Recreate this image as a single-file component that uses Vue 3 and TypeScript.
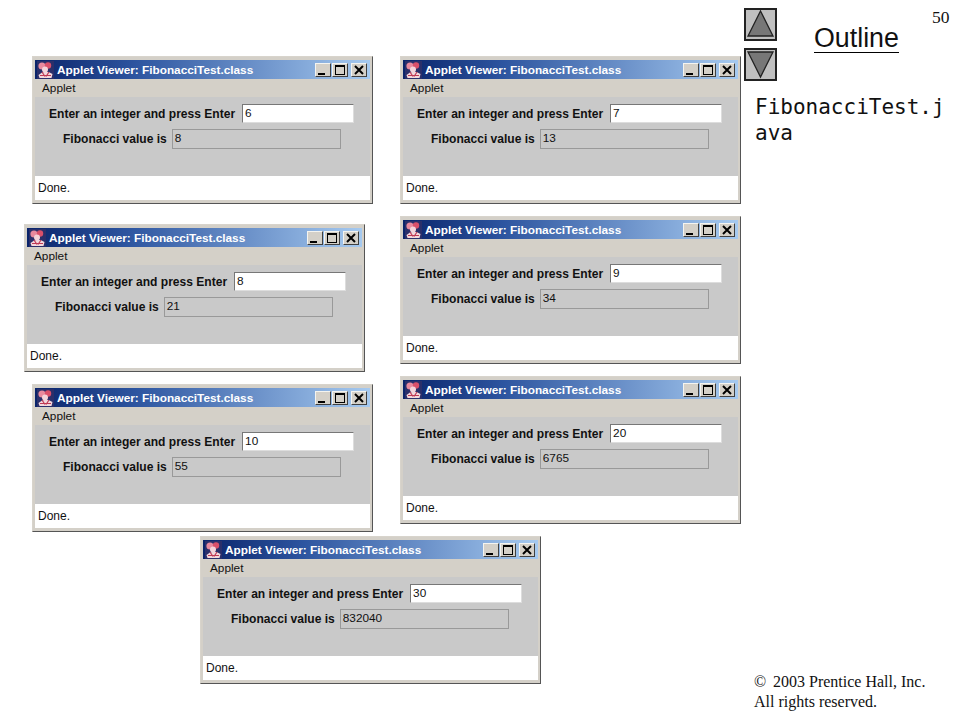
<script setup lang="ts">
interface ViewerWindow {
  x: number
  y: number
  input: string
  value: string
}

const windows: ViewerWindow[] = [
  { x: 32, y: 56, input: '6', value: '8' },
  { x: 400, y: 56, input: '7', value: '13' },
  { x: 24, y: 224, input: '8', value: '21' },
  { x: 400, y: 216, input: '9', value: '34' },
  { x: 32, y: 384, input: '10', value: '55' },
  { x: 400, y: 376, input: '20', value: '6765' },
  { x: 200, y: 536, input: '30', value: '832040' },
]
</script>

<template>
  <div class="slide">
    <div
      v-for="win in windows"
      :key="win.input"
      class="window"
      :style="{ left: win.x + 'px', top: win.y + 'px' }"
    >
      <div class="titlebar">
        <svg class="app-icon" width="17" height="18" viewBox="0 0 17 18">
          <rect x="0" y="0" width="17" height="18" fill="#2a2f6a" />
          <circle cx="5" cy="5" r="3.6" fill="#e88a9e" />
          <circle cx="11" cy="4.5" r="3.2" fill="#d9506a" />
          <circle cx="8" cy="8.5" r="3" fill="#f4d4da" />
          <path d="M1.5 14 Q8 8 15.5 13 L14.5 17 L2.5 17 Z" fill="#f2d8dd" />
          <path d="M3 14.5 H14 M5 11 L8 15.5 M12 11 L9 15.5" stroke="#c03a55" stroke-width="1.2" fill="none" />
        </svg>
        <span class="title">Applet Viewer: FibonacciTest.class</span>
        <div class="controls">
          <span class="ctl">
            <svg width="16" height="14" viewBox="0 0 16 14"><path d="M3 11 H10" stroke="#000" stroke-width="2" /></svg>
          </span>
          <span class="ctl">
            <svg width="16" height="14" viewBox="0 0 16 14"><rect x="3.5" y="2.5" width="9" height="9" fill="none" stroke="#000" /><path d="M3 3 H13" stroke="#000" stroke-width="2" /></svg>
          </span>
          <span class="ctl close">
            <svg width="16" height="14" viewBox="0 0 16 14"><path d="M4 3 L12 11 M12 3 L4 11" stroke="#000" stroke-width="2" /></svg>
          </span>
        </div>
      </div>
      <div class="menubar">Applet</div>
      <div class="content">
        <div class="row row-input">
          <label>Enter an integer and press Enter</label>
          <div class="field">{{ win.input }}</div>
        </div>
        <div class="row row-output">
          <label>Fibonacci value is</label>
          <div class="field readonly">{{ win.value }}</div>
        </div>
      </div>
      <div class="status">Done.</div>
    </div>

    <aside class="outline">
      <div class="nav-col">
        <button class="nav">
          <svg width="29" height="29" viewBox="0 0 29 29"><path d="M14.5 1 L27 26 H2 Z" fill="#777" stroke="#222" stroke-width="1.3" /></svg>
        </button>
        <button class="nav">
          <svg width="29" height="29" viewBox="0 0 29 29"><path d="M2 2 H27 L14.5 27 Z" fill="#777" stroke="#222" stroke-width="1.3" /></svg>
        </button>
      </div>
      <h1>Outline</h1>
      <span class="page">50</span>
      <div class="file">FibonacciTest.j<br />ava</div>
      <footer>
        <div><span class="copy">&copy;</span>2003 Prentice Hall, Inc.</div>
        <div>All rights reserved.</div>
      </footer>
    </aside>
  </div>
</template>

<style scoped>
.slide {
  position: relative;
  width: 960px;
  height: 720px;
  background: #fff;
  overflow: hidden;
}
.window {
  position: absolute;
  box-sizing: border-box;
  width: 341px;
  height: 148px;
  display: flex;
  flex-direction: column;
  padding: 3px 2px 3px 2px;
  background: #d4d0c8;
  border: 1px solid;
  border-color: #d8d4cc #555 #555 #d8d4cc;
  font-family: "Liberation Sans", Arial, sans-serif;
  color: #111;
}
.titlebar {
  height: 19px;
  flex: none;
  display: flex;
  align-items: center;
  padding: 0 3px 0 2px;
  background: linear-gradient(90deg, #0a246a 0%, #2d55a0 30%, #a6caf0 100%);
  overflow: hidden;
}
.app-icon {
  flex: none;
}
.title {
  margin-left: 3px;
  color: #fff;
  font-size: 11.8px;
  font-weight: bold;
  white-space: nowrap;
}
.controls {
  margin-left: auto;
  display: flex;
  gap: 1px;
}
.ctl {
  box-sizing: border-box;
  width: 16px;
  height: 14px;
  display: flex;
  background: #d4d0c8;
  border: 1px solid;
  border-color: #f4f4f0 #404040 #404040 #f4f4f0;
}
.ctl svg {
  margin: -1px;
  flex: none;
}
.ctl.close {
  margin-left: 2px;
}
.menubar {
  height: 18px;
  flex: none;
  padding-left: 7px;
  font-size: 11.8px;
  line-height: 18px;
}
.content {
  height: 79px;
  flex: none;
  background: #c9c9c9;
  overflow: hidden;
}
.row {
  display: flex;
  align-items: center;
  font-size: 12.05px;
  font-weight: bold;
  gap: 6px;
}
.row-input {
  height: 19px;
  margin-top: 7px;
  padding-left: 14px;
}
.row-output {
  height: 20px;
  margin-top: 6px;
  padding-left: 28px;
}
.field {
  box-sizing: border-box;
  height: 100%;
  width: 112px;
  padding-left: 2px;
  background: #fff;
  border: 1px solid;
  border-color: #777 #ddd #ddd #777;
  font-size: 11.8px;
  font-weight: normal;
  line-height: 17px;
}
.row-input .field {
  position: relative;
  left: 1px;
}
.field.readonly {
  width: 169px;
  margin-left: -1px;
  background: #c9c9c9;
  border-color: #999;
}
.status {
  flex: 1;
  padding-left: 3px;
  background: #fff;
  font-size: 12px;
  line-height: 24px;
}
.nav-col {
  position: absolute;
  left: 744px;
  top: 8px;
  display: flex;
  flex-direction: column;
  gap: 7px;
}
.nav {
  box-sizing: border-box;
  width: 33px;
  height: 33px;
  padding: 0;
  background: #c0c0c0;
  border: 2px solid #222;
  display: flex;
}
h1 {
  position: absolute;
  left: 814px;
  top: 21px;
  margin: 0;
  height: 31px;
  border-bottom: 1px solid #000;
  font-family: "Liberation Sans", Arial, sans-serif;
  font-size: 26.8px;
  font-weight: normal;
  line-height: 35px;
  color: #111;
}
.page {
  position: absolute;
  left: 932px;
  top: 8px;
  font-family: "Liberation Serif", "Times New Roman", serif;
  font-size: 17.5px;
  line-height: 18px;
  color: #111;
}
.file {
  position: absolute;
  left: 755px;
  top: 94px;
  font-family: "DejaVu Sans Mono", monospace;
  font-size: 21px;
  line-height: 26px;
  color: #111;
}
footer {
  position: absolute;
  left: 754px;
  top: 672px;
  font-family: "Liberation Serif", "Times New Roman", serif;
  font-size: 16px;
  line-height: 20px;
  color: #111;
}
.copy {
  display: inline-block;
  width: 19px;
}
</style>

<style>
html,
body {
  margin: 0;
  background: #fff;
}
</style>
